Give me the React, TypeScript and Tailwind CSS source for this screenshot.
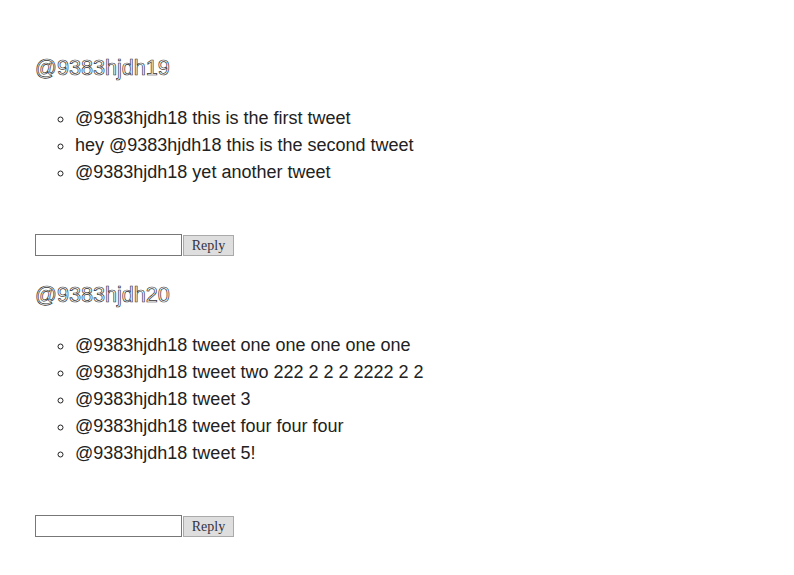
const threads = [
  {
    user: "@9383hjdh19",
    tweets: [
      "@9383hjdh18 this is the first tweet",
      "hey @9383hjdh18 this is the second tweet",
      "@9383hjdh18 yet another tweet",
    ],
  },
  {
    user: "@9383hjdh20",
    tweets: [
      "@9383hjdh18 tweet one one one one one",
      "@9383hjdh18 tweet two 222 2 2 2 2222 2 2",
      "@9383hjdh18 tweet 3",
      "@9383hjdh18 tweet four four four",
      "@9383hjdh18 tweet 5!",
    ],
  },
];

export default function App() {
  return (
    <main className="w-[794px] h-[575px] bg-white overflow-hidden font-['Liberation_Sans',Arial,sans-serif] text-[#222]">
      <div className="pt-[55px] pl-[35px]">
        {threads.map((t) => (
          <section key={t.user}>
            <h2 className="text-[21.6px] leading-[26px] text-white [-webkit-text-stroke:0.7px_#333]">
              {t.user}
            </h2>
            <ul className="mt-[23.5px] mb-[48.5px] pl-[40px] list-[circle] text-[18px] leading-[27px]">
              {t.tweets.map((tw) => (
                <li key={tw}>{tw}</li>
              ))}
            </ul>
            <form className="flex items-start mb-[26px]" onSubmit={(e) => e.preventDefault()}>
              <input
                type="text"
                className="w-[147px] h-[22px] border border-[#777] bg-white outline-none"
              />
              <button
                type="submit"
                className="ml-px mt-px w-[51px] h-[21px] bg-[#dedede] border border-[#aaa] text-[14px] leading-none text-[#334] font-['Liberation_Serif',serif]"
              >
                Reply
              </button>
            </form>
          </section>
        ))}
      </div>
      <div className="mt-[38px] mx-[12px] border-t border-dotted border-[#cfe8cf]" />
    </main>
  );
}
